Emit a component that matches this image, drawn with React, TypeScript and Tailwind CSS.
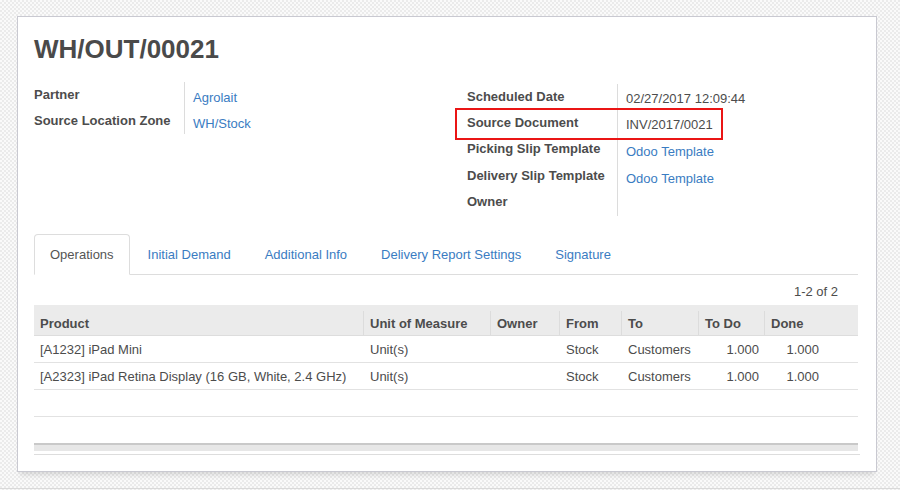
const leftFields = [
  { label: "Partner", value: "Agrolait", link: true },
  { label: "Source Location Zone", value: "WH/Stock", link: true },
]

const rightFields = [
  { label: "Scheduled Date", value: "02/27/2017 12:09:44", link: false, h: "h-[26px]" },
  { label: "Source Document", value: "INV/2017/0021", link: false, h: "h-[26px]" },
  { label: "Picking Slip Template", value: "Odoo Template", link: true, h: "h-[27px]" },
  { label: "Delivery Slip Template", value: "Odoo Template", link: true, h: "h-[26px]" },
  { label: "Owner", value: "", link: false, h: "h-[27px]" },
]

const tabs = ["Operations", "Initial Demand", "Additional Info", "Delivery Report Settings", "Signature"]

const columns = [
  { label: "Product", right: false },
  { label: "Unit of Measure", right: false },
  { label: "Owner", right: false },
  { label: "From", right: false },
  { label: "To", right: false },
  { label: "To Do", right: true },
  { label: "Done", right: true },
  { label: "", right: false },
]

const rows = [
  ["[A1232] iPad Mini", "Unit(s)", "", "Stock", "Customers", "1.000", "1.000", ""],
  ["[A2323] iPad Retina Display (16 GB, White, 2.4 GHz)", "Unit(s)", "", "Stock", "Customers", "1.000", "1.000", ""],
]

const grid = "grid grid-cols-[329px_127px_69px_62px_77px_66px_60px_1fr]"

function FieldGroup({
  fields,
  className,
  children,
}: {
  fields: { label: string; value: string; link: boolean; h?: string }[]
  className?: string
  children?: React.ReactNode
}) {
  return (
    <div className={"relative flex " + (className ?? "")}>
      <div className="flex w-[150px] flex-col">
        {fields.map((f) => (
          <div key={f.label} className={(f.h ?? "h-[26px]") + " pt-[4px] font-bold"}>
            {f.label}
          </div>
        ))}
      </div>
      <div className="flex flex-col border-l border-[#dcdcdc] pl-[8px]">
        {fields.map((f) => (
          <div
            key={f.label}
            className={(f.h ?? "h-[26px]") + (f.link ? " pt-[7px] text-[#3a7cc2]" : " pt-[6px]")}
          >
            {f.value}
          </div>
        ))}
      </div>
      {children}
    </div>
  )
}

export default function App() {
  return (
    <div className="h-[490px] w-[900px] overflow-hidden bg-[image:repeating-conic-gradient(#ebebeb_0%_25%,#fafafa_0%_50%)] bg-[length:4px_4px] pl-[17px] pt-[16px] font-['Liberation_Sans',Arial,sans-serif] text-[13px] leading-[18px] text-[#4c4c4c]">
      {/* Form sheet */}
      <div className="flex h-[456px] w-[860px] flex-col border border-[#c9c9d1] bg-white pl-[16px] pr-[18px] pt-[17px] shadow-[0_6px_5px_-3px_rgba(0,0,0,0.12)]">
        <h1 className="text-[26px] font-bold leading-[30px] text-[#4a4a4a]">WH/OUT/00021</h1>

        {/* Field groups */}
        <div className="mt-[18px] flex">
          <FieldGroup fields={leftFields} className="w-[433px] self-start" />
          <FieldGroup fields={rightFields} className="mt-[2px]">
            <div className="absolute left-[-12px] top-[24px] h-[32px] w-[268px] border-2 border-[#ea1515]" />
          </FieldGroup>
        </div>

        {/* Notebook tabs */}
        <div className="mt-[18px] flex border-b border-[#dddddd]">
          {tabs.map((t, i) => (
            <div
              key={t}
              className={
                i === 0
                  ? "-mb-px mr-[2px] rounded-t-[4px] border border-[#dddddd] border-b-white bg-white px-[15px] py-[10px] leading-[19px] text-[#555555]"
                  : "-mb-px mr-[2px] border border-transparent px-[15px] py-[10px] leading-[19px] text-[#3a7cc2]"
              }
            >
              {t}
            </div>
          ))}
        </div>

        {/* Pager */}
        <div className="flex justify-end pb-[4px] pr-[20px] pt-[8px]">1-2 of 2</div>

        {/* One2many list */}
        <div className={grid + " h-[31px] border-b border-[#dddddd] bg-[#ebebeb] font-bold"}>
          {columns.map((c, i) => (
            <div
              key={i}
              className={
                "mt-[6px] pt-[4px] " +
                (i === 0 ? "pl-[6px] " : i === 7 ? "" : "border-l border-[#dcdcdc] pl-[6px] ")
              }
            >
              {c.label}
            </div>
          ))}
        </div>
        {rows.map((r, ri) => (
          <div key={ri} className={grid + " h-[27px] border-b border-[#e2e2e2]"}>
            {r.map((cell, ci) => (
              <div
                key={ci}
                className={
                  "whitespace-nowrap pt-[5px] " +
                  (columns[ci].right ? "pr-[5px] text-right" : ci === 0 ? "pl-[6px]" : "pl-[7px]")
                }
              >
                {cell}
              </div>
            ))}
          </div>
        ))}
        <div className="h-[27px] border-b border-[#e2e2e2]" />

        {/* List footer */}
        <div className="mt-[26px] h-[8px] border-t-2 border-[#c9c9c9] bg-[#e7e7e7]" />
        <div className="mr-[-2px] mt-[3px] h-px bg-[#dddddd]" />
      </div>
      <div className="ml-[-17px] mt-[16px] h-px w-[900px] bg-[#d9d9d9]" />
    </div>
  )
}
